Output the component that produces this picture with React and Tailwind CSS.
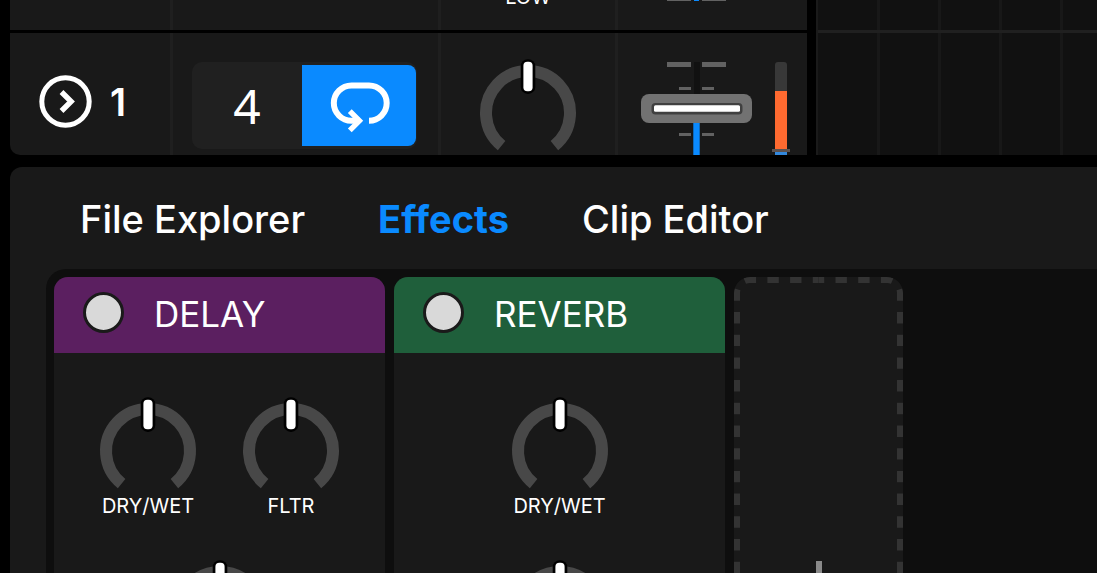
import React, { useState } from "react";

const tabs = ["File Explorer", "Effects", "Clip Editor"];

const effects = [
  {
    name: "DELAY",
    header: "bg-[#5b1f60]",
    knobs: ["DRY/WET", "FLTR"],
    amount: "Delay time",
  },
  {
    name: "REVERB",
    header: "bg-[#1f5f3b]",
    knobs: ["DRY/WET"],
    amount: "Reverb size",
  },
];

function Knob({ label }) {
  const [value, setValue] = useState(50);
  const angle = (value - 50) * 2.8;

  return (
    <div className="relative h-[92px] w-24">
      <svg viewBox="0 0 96 92" className="h-[92px] w-24 overflow-visible" aria-hidden="true">
        <path d="M21.6 86.6A42 42 0 1 1 74.4 86.6" fill="none" stroke="#484848" strokeWidth="12" />
        <g transform={`rotate(${angle} 48 54)`}>
          <rect x="40.7" y="0.3" width="14.6" height="34.6" rx="7" fill="#000" />
          <rect x="43.4" y="2.8" width="9.2" height="29.4" rx="4" fill="#fff" />
        </g>
      </svg>
      <input
        type="range"
        aria-label={label}
        value={value}
        onChange={(e) => setValue(Number(e.target.value))}
        className="absolute inset-0 h-full w-full cursor-pointer opacity-0"
      />
    </div>
  );
}

function LabeledKnob({ label }) {
  return (
    <div className="flex w-[143px] flex-col items-center gap-[5px]">
      <Knob label={label} />
      <span className="text-xl leading-6">{label}</span>
    </div>
  );
}

function Fader() {
  return (
    <div className="relative h-[93px] w-[111px]">
      <svg viewBox="0 0 111 93" className="h-[93px] w-[111px]" aria-hidden="true">
        <g fill="#626262">
          <rect x="26" y="0" width="24" height="5" />
          <rect x="61" y="0" width="24" height="5" />
          <rect x="38" y="25" width="12" height="3" />
          <rect x="61" y="25" width="12" height="3" />
          <rect x="38" y="71" width="12" height="3" />
          <rect x="61" y="71" width="12" height="3" />
        </g>
        <rect x="53" y="0" width="6" height="40" fill="#111" />
        <rect x="52.3" y="50" width="6.4" height="43" fill="#0a8aff" />
        <rect x="0" y="32" width="111" height="29" rx="8" fill="#727272" />
        <rect x="10.5" y="41" width="91" height="11.5" rx="4" fill="#404040" />
        <rect x="13" y="43.3" width="86" height="6.4" rx="1.5" fill="#fff" />
      </svg>
      <input
        type="range"
        aria-label="Volume"
        defaultValue={80}
        className="absolute inset-0 h-full w-full cursor-pointer opacity-0 [writing-mode:vertical-lr] [direction:rtl]"
      />
    </div>
  );
}

function LevelMeter() {
  return (
    <div
      role="meter"
      aria-label="Level"
      aria-valuenow={70}
      aria-valuemin={0}
      aria-valuemax={100}
      className="flex h-[93px] w-[18px] flex-col items-center"
    >
      <div className="h-[29px] w-3 rounded-t-[3px] bg-[#383838]" />
      <div className="h-[58px] w-3 bg-[#ff6a30]" />
      <div className="h-[3px] w-full bg-[#5c5250]" />
      <div className="h-[3px] w-3 bg-[#3388dd]" />
    </div>
  );
}

// bottom edge of the track that is scrolled off the top
function PreviousTrack() {
  return (
    <div className="flex h-[30px] items-end overflow-hidden bg-[#191919]">
      <div className="h-full w-[163px] border-r-[3px] border-[#1f1f1f]" />
      <div className="h-full w-[268px] border-r-[3px] border-[#1f1f1f]" />
      <div className="flex h-full w-[177px] items-end justify-center border-r-[3px] border-[#1f1f1f] pb-[21px]">
        <span className="text-xl leading-6">LOW</span>
      </div>
      <div className="h-full w-[189px] pl-[23px]">
        <svg viewBox="0 0 111 2" className="h-[2px] w-[111px]" aria-hidden="true">
          <rect x="26" y="0" width="24" height="1" fill="#626262" />
          <rect x="61" y="0" width="24" height="1" fill="#626262" />
          <rect x="53" y="0" width="5" height="1" fill="#0a8aff" />
        </svg>
      </div>
    </div>
  );
}

function Track() {
  const [steps, setSteps] = useState("4");

  return (
    <div className="flex h-[122px] overflow-hidden rounded-bl-[10px] bg-[#191919]">
      <div className="flex w-[163px] items-start border-r-[3px] border-[#1f1f1f] pt-[42px] pl-[29px]">
        <button type="button" aria-label="Play track" className="size-[53px]">
          <svg viewBox="0 0 53 53" className="size-[53px]" fill="none" stroke="#fff" strokeWidth="5" aria-hidden="true">
            <circle cx="26.5" cy="26.5" r="23.7" />
            <path d="M22.5 17l9.6 9.5-9.6 9.5" strokeWidth="5.4" />
          </svg>
        </button>
        <span className="ml-[18px] text-[38px] leading-[54px] font-semibold">1</span>
      </div>

      <div className="w-[268px] border-r-[3px] border-[#1f1f1f] pt-[29px] pl-[19px]">
        <div className="flex h-[87px] w-[225px] rounded-[10px] bg-[#202020] py-[3px] pr-px">
          <input
            type="text"
            aria-label="Loop length"
            value={steps}
            onChange={(e) => setSteps(e.target.value)}
            className="w-[110px] bg-transparent text-center font-['Noto_Sans',sans-serif] text-5xl outline-none"
          />
          <button
            type="button"
            aria-label="Loop"
            className="flex flex-1 items-center justify-center rounded-r-lg bg-[#0a8aff]"
          >
            <svg
              viewBox="0 0 60 52"
              className="h-[52px] w-[60px] overflow-visible"
              fill="none"
              stroke="#fff"
              aria-hidden="true"
            >
              <path d="M40 40.8A17.7 17.7 0 0 0 40 5.4H22.5A17.7 17.7 0 0 0 22.5 40.8H31" strokeWidth="6" />
              <path d="M20.8 31.2l9.6 9.6-9.6 9.6" strokeWidth="5.4" />
            </svg>
          </button>
        </div>
      </div>

      <div className="flex w-[177px] justify-center border-r-[3px] border-[#1f1f1f] pt-[26px]">
        <Knob label="Filter" />
      </div>

      <div className="flex w-[189px] gap-5 pt-[29px] pl-[23px]">
        <Fader />
        <LevelMeter />
      </div>
    </div>
  );
}

function Timeline() {
  return (
    <div className="flex min-w-0 flex-1 flex-col border-l-2 border-[#1a1a1a] bg-[#111111]">
      {["h-[33px] border-b-[3px] border-[#202020]", "h-[122px]"].map((row) => (
        <div key={row} className={`${row} flex overflow-hidden pl-px`}>
          {[1, 2, 3, 4, 5].map((beat) => (
            <div key={beat} className="w-[61px] shrink-0 border-r-[3px] border-[#181818]" />
          ))}
        </div>
      ))}
    </div>
  );
}

function EffectCard({ effect }) {
  return (
    <section className="h-[628px] w-[331px] shrink-0 overflow-hidden rounded-[14px] bg-[#191919]">
      <header className={`${effect.header} flex h-[76px] items-center pb-[6px] pl-[29px]`}>
        <button
          type="button"
          aria-label={`Toggle ${effect.name}`}
          className="size-[41px] rounded-full border-3 border-[#1a1a1a] bg-[#d9d9d9]"
        />
        <h2 className="ml-[30px] pt-1 text-[35px] leading-10">{effect.name}</h2>
      </header>
      <div className="flex flex-col items-center gap-[42px] pt-[44px]">
        <div className="flex">
          {effect.knobs.map((label) => (
            <LabeledKnob key={label} label={label} />
          ))}
        </div>
        <Knob label={effect.amount} />
      </div>
    </section>
  );
}

function AddEffect() {
  return (
    <button
      type="button"
      aria-label="Add effect"
      className="relative flex h-[628px] w-[169px] shrink-0 items-center justify-center overflow-hidden rounded-[16px] bg-[#191919]"
    >
      {/* dashes start at the top centre so both sides mirror each other */}
      <svg
        viewBox="0 0 169 628"
        className="absolute inset-0 h-full w-full"
        fill="none"
        stroke="#333333"
        strokeWidth="6"
        strokeDasharray="11.4 11.3"
        strokeDashoffset="5.7"
        aria-hidden="true"
      >
        <path d="M84.5 3H153A13 13 0 0 1 166 16V612A13 13 0 0 1 153 625H84.5" />
        <path d="M84.5 3H16A13 13 0 0 0 3 16V612A13 13 0 0 0 16 625H84.5" />
      </svg>
      <svg viewBox="0 0 60 60" className="size-[60px]" stroke="#8a8a8a" strokeWidth="6" aria-hidden="true">
        <path d="M30 0V60M0 30H60" />
      </svg>
    </button>
  );
}

export default function App() {
  const [active, setActive] = useState("Effects");

  return (
    <main className="flex h-screen flex-col gap-3 overflow-hidden bg-black pl-[10px] font-['Inter',sans-serif] text-white">
      <div className="flex shrink-0 gap-[9px]">
        <div className="flex shrink-0 flex-col gap-[3px]">
          <PreviousTrack />
          <Track />
        </div>
        <Timeline />
      </div>

      <div className="flex min-h-0 flex-1 flex-col rounded-tl-[12px] bg-[#191919] pl-9">
        <nav className="flex h-[102px] shrink-0 items-center gap-[73px] pt-[2px] pl-[34px]">
          {tabs.map((tab) => (
            <button
              key={tab}
              type="button"
              onClick={() => setActive(tab)}
              className={
                tab === active
                  ? "text-[38px] leading-10 font-bold text-[#0a8aff]"
                  : "text-[38px] leading-10 font-medium"
              }
            >
              {tab}
            </button>
          ))}
        </nav>

        <div className="flex min-h-0 flex-1 items-start gap-[9px] overflow-hidden rounded-tl-[20px] bg-[#0e0e0e] pt-2 pl-2">
          {effects.map((effect) => (
            <EffectCard key={effect.name} effect={effect} />
          ))}
          <AddEffect />
        </div>
      </div>
    </main>
  );
}
